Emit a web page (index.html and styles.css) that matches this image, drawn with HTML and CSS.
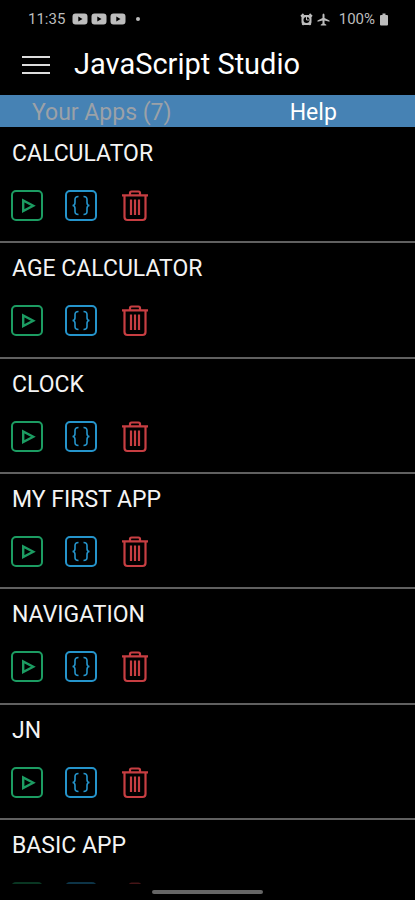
FILE: index.html
```html
<!DOCTYPE html>
<html lang="en">
<head>
<meta charset="utf-8">
<meta name="viewport" content="width=device-width, initial-scale=1">
<title>JavaScript Studio</title>
<link rel="stylesheet" href="styles.css">
</head>
<body>
<svg class="sprite" aria-hidden="true">
  <symbol id="play" viewBox="0 0 32 32">
    <rect x="1" y="1" width="30" height="29" rx="4" fill="none" stroke="currentColor" stroke-width="2"/>
    <path d="M12.200 10.500v10.500l10-5.250z" fill="none" stroke="currentColor" stroke-width="2.400"/>
  </symbol>
  <symbol id="code" viewBox="0 0 32 32">
    <rect x="1" y="1" width="30" height="29" rx="4" fill="none" stroke="currentColor" stroke-width="2"/>
    <path d="M13.500 6.500c-3 0-3.500 1-3.500 3v3c0 2-.500 3-2.500 3 2 0 2.500 1 2.500 3v3c0 2 .500 3 3.500 3M18.500 6.500c3 0 3.500 1 3.500 3v3c0 2 .500 3 2.500 3-2 0-2.500 1-2.500 3v3c0 2-.500 3-3.500 3" fill="none" stroke="currentColor" stroke-width="1.600"/>
  </symbol>
  <symbol id="trash" viewBox="0 0 32 32">
    <path d="M3 5.300h26M11 5V3q0-1.500 1.500-1.500h7Q21 1.500 21 3v2M5.500 5.500V27q0 3 3 3h15q3 0 3-3V5.500M12 9.500v15.500M16 9.500v15.500M20 9.500v15.500" fill="none" stroke="currentColor" stroke-width="2.200"/>
  </symbol>
  <symbol id="video" viewBox="0 0 16 12">
    <path fill-rule="evenodd" d="M3.500 .500h9q3 0 3 3v5q0 3-3 3h-9q-3 0-3-3v-5q0-3 3-3zM6.300 3.500v5L10.500 6z" fill="currentColor"/>
  </symbol>
</svg>
<div class="phone">
  <div class="status">
    <span class="clock">11:35</span>
    <span class="videos">
      <svg class="video"><use href="#video"/></svg>
      <svg class="video"><use href="#video"/></svg>
      <svg class="video"><use href="#video"/></svg>
    </span>
    <span class="dot"></span>
    <span class="system">
      <svg class="alarm" viewBox="0 0 13 13"><path d="M1 3.500 3.500 1M9.500 1 12 3.500M2.500 12l1.500-2M10.500 12 9 10" stroke="currentColor" stroke-width="1.800"/><rect x="1.500" y="2" width="10" height="10" rx="3" fill="currentColor"/><circle cx="6.500" cy="7" r="3" fill="#000"/><path d="M6.500 4v3H9" fill="none" stroke="currentColor"/></svg>
      <svg class="plane" viewBox="0 0 13 13"><path d="M6.500 .500q1 0 1 1.500v3l5 2.500v1.300L7.500 7.500v3l1.800 1.200v.800h-5.600v-.800L5.500 10.500v-3L.500 8.800V7.500l5-2.500V2q0-1.500 1-1.500z" fill="currentColor"/></svg>
      <span class="percent">100%</span>
      <svg class="battery" viewBox="0 0 8 13"><path d="M2.500 .500h3V2H7q1 0 1 1v8.500q0 1-1 1H1q-1 0-1-1V3q0-1 1-1h1.500z" fill="currentColor"/></svg>
    </span>
  </div>
  <header class="header">
    <button class="menu" aria-label="Menu"><span></span><span></span><span></span></button>
    <h1>JavaScript Studio</h1>
  </header>
  <nav class="tabs">
    <a class="tab current" href="#apps">Your Apps (7)</a>
    <a class="tab" href="#help">Help</a>
  </nav>
  <main class="apps" id="apps">
    <section class="app">
      <h2>CALCULATOR</h2>
      <div class="actions">
        <button class="run" aria-label="Run"><svg><use href="#play"/></svg></button>
        <button class="edit" aria-label="Edit code"><svg><use href="#code"/></svg></button>
        <button class="delete" aria-label="Delete"><svg><use href="#trash"/></svg></button>
      </div>
    </section>
    <section class="app">
      <h2>AGE CALCULATOR</h2>
      <div class="actions">
        <button class="run" aria-label="Run"><svg><use href="#play"/></svg></button>
        <button class="edit" aria-label="Edit code"><svg><use href="#code"/></svg></button>
        <button class="delete" aria-label="Delete"><svg><use href="#trash"/></svg></button>
      </div>
    </section>
    <section class="app">
      <h2>CLOCK</h2>
      <div class="actions">
        <button class="run" aria-label="Run"><svg><use href="#play"/></svg></button>
        <button class="edit" aria-label="Edit code"><svg><use href="#code"/></svg></button>
        <button class="delete" aria-label="Delete"><svg><use href="#trash"/></svg></button>
      </div>
    </section>
    <section class="app">
      <h2>MY FIRST APP</h2>
      <div class="actions">
        <button class="run" aria-label="Run"><svg><use href="#play"/></svg></button>
        <button class="edit" aria-label="Edit code"><svg><use href="#code"/></svg></button>
        <button class="delete" aria-label="Delete"><svg><use href="#trash"/></svg></button>
      </div>
    </section>
    <section class="app">
      <h2>NAVIGATION</h2>
      <div class="actions">
        <button class="run" aria-label="Run"><svg><use href="#play"/></svg></button>
        <button class="edit" aria-label="Edit code"><svg><use href="#code"/></svg></button>
        <button class="delete" aria-label="Delete"><svg><use href="#trash"/></svg></button>
      </div>
    </section>
    <section class="app">
      <h2>JN</h2>
      <div class="actions">
        <button class="run" aria-label="Run"><svg><use href="#play"/></svg></button>
        <button class="edit" aria-label="Edit code"><svg><use href="#code"/></svg></button>
        <button class="delete" aria-label="Delete"><svg><use href="#trash"/></svg></button>
      </div>
    </section>
    <section class="app partial">
      <h2>BASIC APP</h2>
      <div class="actions">
        <button class="run" aria-label="Run"><svg><use href="#play"/></svg></button>
        <button class="edit" aria-label="Edit code"><svg><use href="#code"/></svg></button>
        <button class="delete" aria-label="Delete"><svg><use href="#trash"/></svg></button>
      </div>
    </section>
  </main>
  <div class="gesture"><span></span></div>
</div>
</body>
</html>
```
FILE: styles.css
```css
* { box-sizing: border-box; }

body {
  margin: 0;
  background: #000;
  color: #f4f4f4;
  font-family: Roboto, sans-serif;
}

button {
  padding: 0;
  border: 0;
  background: none;
  color: inherit;
  cursor: pointer;
}

svg { display: block; }

.sprite { position: absolute; width: 0; height: 0; }

.phone {
  display: flex;
  flex-direction: column;
  height: 100vh;
}

.status {
  display: flex;
  align-items: center;
  flex: none;
  height: 38px;
  padding: 0 27px 0 28px;
  color: #bdbdbd;
  font-size: 15px;
}

.videos { display: flex; gap: 3px; margin-left: 7px; }
.video { width: 16px; height: 12px; }

.dot {
  width: 4px;
  height: 4px;
  margin-left: 10px;
  border-radius: 50%;
  background: currentColor;
}

.system { display: flex; align-items: center; margin-left: auto; }
.alarm, .plane { width: 13px; height: 13px; }
.plane { margin-left: 4px; }
.percent { margin: 0 5px 0 9px; }
.battery { width: 8px; height: 13px; }

.header {
  display: flex;
  align-items: center;
  flex: none;
  gap: 24px;
  height: 57px;
  padding: 0 22px 5px;
}

.header h1 { margin: 0; font-size: 29px; font-weight: 400; line-height: 34px; color: #fff; }

.menu {
  display: grid;
  gap: 6px;
  width: 28px;
  padding-top: 2px;
}
.menu span { height: 2px; background: #dcdcdc; }

.tabs {
  display: grid;
  grid-template-columns: 1fr 1fr;
  flex: none;
  gap: 8px;
  height: 32px;
  background: #4682b4;
}

.tab {
  color: #fff;
  font-size: 23px;
  line-height: 36px;
  text-align: center;
  text-decoration: none;
}
.tab.current { color: #9ba1a8; }

.apps {
  display: flex;
  flex-direction: column;
  flex: 1;
  min-height: 0;
  padding-top: 1px;
  overflow: hidden;
}

.app {
  flex: 1 0 0;
  min-height: 104px;
  padding: 12px 11px 0;
  border-bottom: 2px solid #606060;
}

.app h2 { margin: 0 1px; font-size: 23px; font-weight: 400; line-height: 28px; }

.actions { display: flex; gap: 22px; margin-top: 22px; }
.actions svg { width: 32px; height: 32px; }
.run { color: #1c9c62; }
.edit { color: #2594cb; }
.delete { color: #c73e42; }

.partial {
  flex: none;
  height: 64px;
  min-height: 0;
  border: 0;
  overflow: hidden;
}
.partial .actions { opacity: 0.35; }

.gesture {
  display: flex;
  justify-content: center;
  flex: none;
  height: 16px;
  padding-top: 6px;
}
.gesture span { width: 111px; height: 4px; border-radius: 2px; background: #666; }
```
